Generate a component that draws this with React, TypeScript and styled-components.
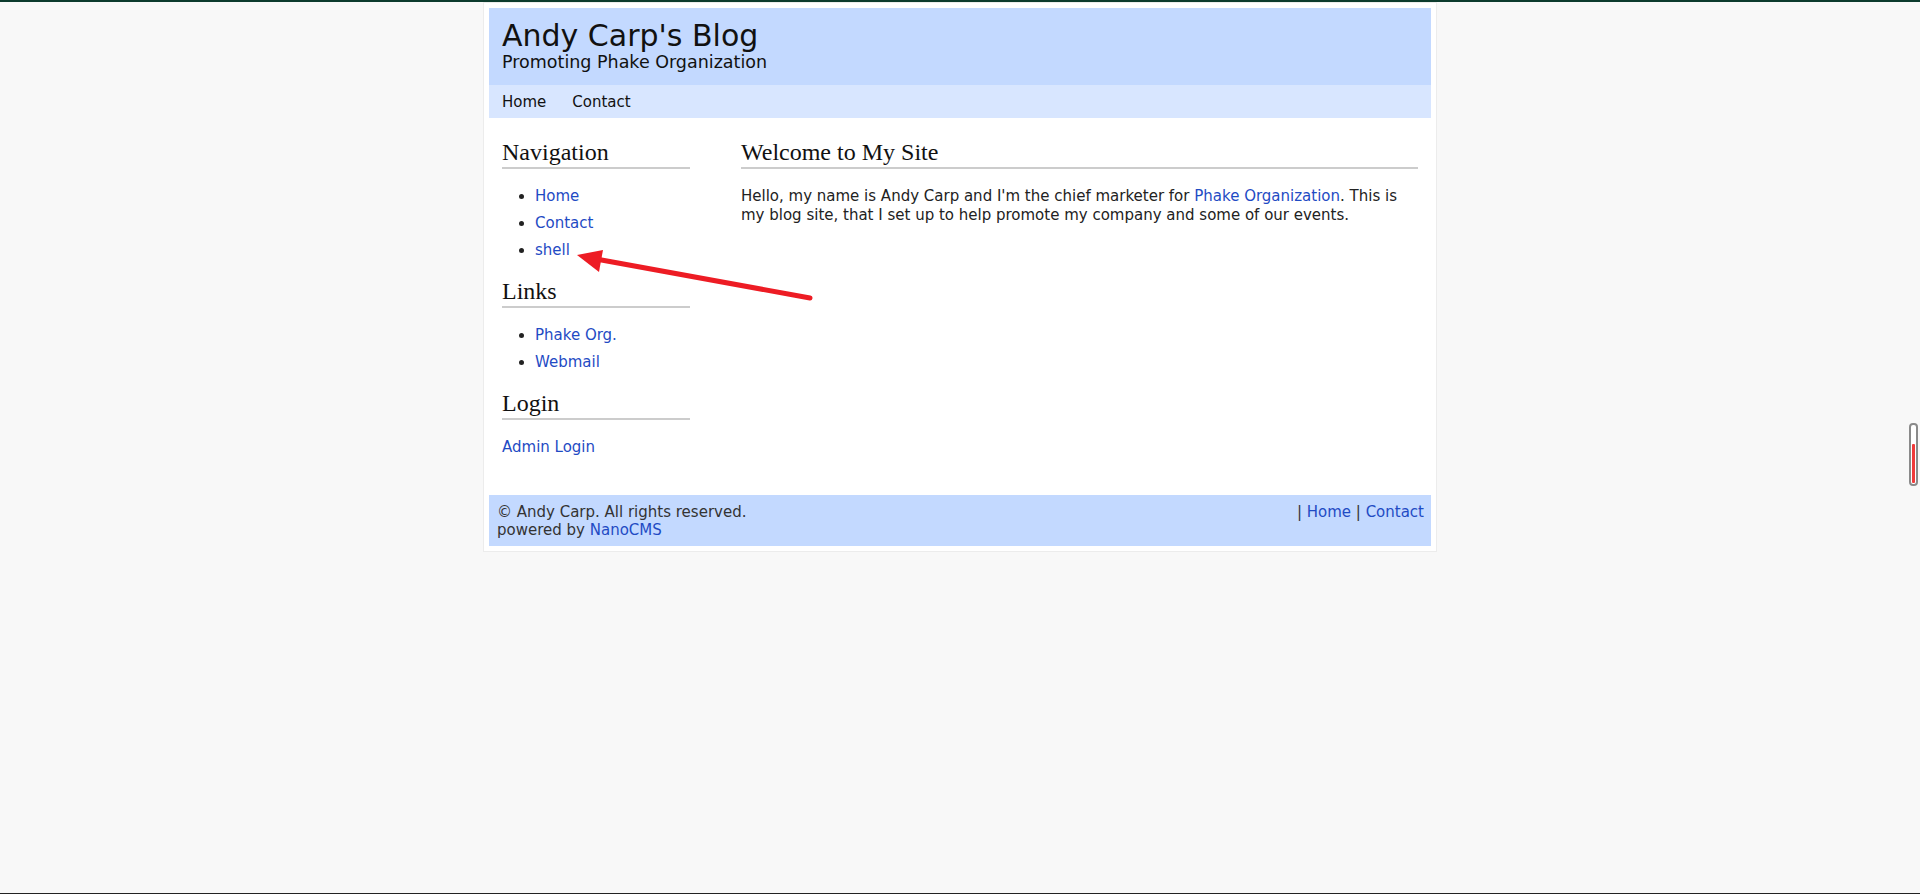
import React from "react";
import styled, { createGlobalStyle } from "styled-components";

const GlobalStyle = createGlobalStyle`
  html, body { margin: 0; padding: 0; }
  body {
    background: #f8f8f8;
    font-family: "DejaVu Sans", Verdana, sans-serif;
    font-size: 15px;
    color: #222;
    min-height: 894px;
    border-top: 2px solid #0c3b2d;
    box-sizing: border-box;
    position: relative;
  }
  a { color: #1f4bc4; text-decoration: none; }
`;

const Page = styled.div`
  width: 942px;
  margin: 0 auto;
  padding: 5px;
  background: #fff;
  border: 1px solid #ececec;
`;

const Header = styled.header`
  background: #c3d9ff;
  padding: 11px 13px 13px;
`;

const Title = styled.h1`
  margin: 0;
  font-weight: normal;
  font-size: 30px;
  line-height: 33px;
  color: #111;
`;

const Subtitle = styled.div`
  font-size: 17.5px;
  line-height: 20px;
  color: #111;
`;

const NavBar = styled.nav`
  background: #d8e6ff;
  height: 33px;
  padding: 0 13px;
  display: flex;
  align-items: center;
  gap: 26px;
`;

const NavLink = styled.a`
  color: #111;
  font-size: 15px;
`;

const Body = styled.div`
  display: flex;
  gap: 51px;
  padding: 21px 13px 39px;
`;

const Sidebar = styled.aside`
  width: 188px;
  flex: none;
`;

const Main = styled.main`
  flex: 1;
`;

const Heading = styled.h2`
  margin: 0;
  font-family: "Liberation Serif", "Times New Roman", serif;
  font-weight: normal;
  font-size: 24px;
  line-height: 26px;
  padding-bottom: 2px;
  border-bottom: 2px solid #cccccc;
  color: #111;
`;

const List = styled.ul`
  margin: 13px 0 15px;
  padding-left: 33px;
  list-style: disc;
`;

const Item = styled.li`
  line-height: 18px;
  padding: 4.5px 0;
`;

const Para = styled.p<{ $tight?: boolean }>`
  margin: 18px 0 0;
  line-height: ${(p) => (p.$tight ? "18px" : "19px")};
`;

const Footer = styled.footer`
  background: #c3d9ff;
  padding: 8px 7px 7px 8px;
  line-height: 18px;
  color: #333;
  display: flex;
  justify-content: space-between;
`;

const Sep = styled.span`
  color: #333;
`;

const Arrow = styled.svg`
  position: absolute;
  left: 0;
  top: 0;
  pointer-events: none;
`;

const ScrollMark = styled.div`
  position: absolute;
  left: 1909px;
  top: 421px;
  width: 5px;
  height: 58px;
  border: 2px solid #8a8a8a;
  border-radius: 4px;
  background: #fff;
  display: flex;
  align-items: flex-end;
  justify-content: center;
  padding: 0 0 1px;
`;

const ScrollFill = styled.div`
  width: 3px;
  height: 39px;
  background: #f03a3a;
  border-radius: 1px;
`;

const BottomLine = styled.div`
  position: absolute;
  left: 0;
  right: 0;
  top: 891px;
  height: 1px;
  background: #222;
`;

export default function App() {
  return (
    <>
      <GlobalStyle />
      <Page>
        <Header>
          <Title>Andy Carp's Blog</Title>
          <Subtitle>Promoting Phake Organization</Subtitle>
        </Header>
        <NavBar>
          <NavLink href="#">Home</NavLink>
          <NavLink href="#">Contact</NavLink>
        </NavBar>
        <Body>
          <Sidebar>
            <Heading>Navigation</Heading>
            <List>
              <Item><a href="#">Home</a></Item>
              <Item><a href="#">Contact</a></Item>
              <Item><a href="#">shell</a></Item>
            </List>
            <Heading>Links</Heading>
            <List>
              <Item><a href="#">Phake Org.</a></Item>
              <Item><a href="#">Webmail</a></Item>
            </List>
            <Heading>Login</Heading>
            <Para $tight><a href="#">Admin Login</a></Para>
          </Sidebar>
          <Main>
            <Heading>Welcome to My Site</Heading>
            <Para>
              Hello, my name is Andy Carp and I'm the chief marketer for{" "}
              <a href="#">Phake Organization</a>. This is my blog site, that I set up to help
              promote my company and some of our events.
            </Para>
          </Main>
        </Body>
        <Footer>
          <div>
            © Andy Carp. All rights reserved.
            <br />
            powered by <a href="#">NanoCMS</a>
          </div>
          <div>
            <Sep>| </Sep>
            <a href="#">Home</a>
            <Sep> | </Sep>
            <a href="#">Contact</a>
          </div>
        </Footer>
      </Page>
      <Arrow width="1920" height="894" viewBox="0 0 1920 894">
        <line x1="810" y1="296" x2="596" y2="257" stroke="#ed1c24" strokeWidth="5" strokeLinecap="round" />
        <polygon points="577,253 603,248 599,270" fill="#ed1c24" />
      </Arrow>
      <ScrollMark>
        <ScrollFill />
      </ScrollMark>
      <BottomLine />
    </>
  );
}
